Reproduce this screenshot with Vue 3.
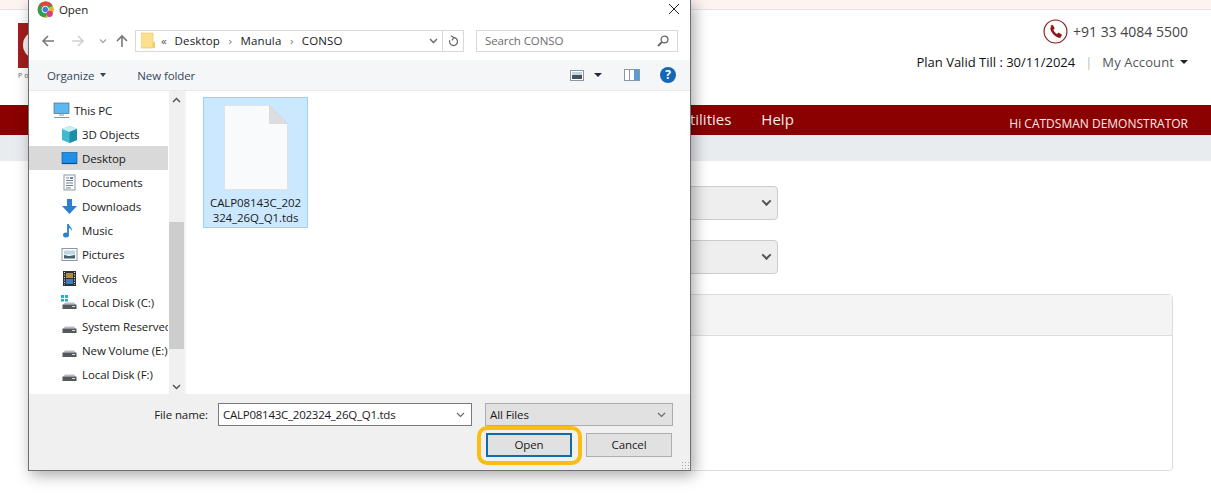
<template>
  <div class="page">
    <div class="top-strip"></div>
    <header class="site-head">
      <div class="logo">
        <div class="logo-mark"><span class="logo-ball"></span></div>
        <div class="logo-text">Po</div>
      </div>
      <div class="head-right">
        <div class="phone">
          <svg class="phone-icon" width="25" height="25" viewBox="0 0 24 24">
            <circle cx="12" cy="12" r="11" fill="none" stroke="#8b1a1a" stroke-width="1.100" />
            <path d="M7 6.500 9.300 5.600l2 3.400-1.400 1.300c.6 1.700 2 3.200 3.700 4l1.400-1.300 3.200 2.200-1 2.200c-.5.7-1.500.8-2.400.5-3.800-1.300-6.700-4.300-7.700-8-.2-1 .1-1.800.9-2.400z" fill="#8b1a1a" />
          </svg>
          <span>+91 33 4084 5500</span>
        </div>
        <div class="account">
          <span class="plan">Plan Valid Till : 30/11/2024</span>
          <span class="sep">|</span>
          <span class="my-acc">My Account</span>
          <span class="caret"></span>
        </div>
      </div>
    </header>
    <nav class="nav">
      <div class="nav-links">
        <span>Utilities</span>
        <span>Help</span>
      </div>
      <div class="nav-user">Hi CATDSMAN DEMONSTRATOR</div>
    </nav>
    <div class="sub-bar"></div>
    <main class="content">
      <div class="fake-select"><i class="sel-chev"></i></div>
      <div class="fake-select"><i class="sel-chev"></i></div>
      <section class="panel">
        <div class="panel-head"></div>
        <div class="panel-body"></div>
      </section>
    </main>

    <!-- windows file dialog on top of the page -->
    <div class="dialog">
      <div class="title-bar">
        <svg class="chrome" width="17" height="17" viewBox="0 0 17 17">
          <circle cx="8.500" cy="8.500" r="8" fill="#2f9e4f" />
          <path d="M8.500.5a8 8 0 0 1 7.100 4.300H8.500a3.700 3.700 0 0 0-3.500 2.500L2.400 3.300A8 8 0 0 1 8.500.5z" fill="#d9483b" />
          <path d="M15.600 4.800A8 8 0 0 1 8 16.500l3-5.200a3.700 3.700 0 0 0 .3-4.200z" fill="#e8b32c" />
          <circle cx="8.300" cy="8.500" r="3.300" fill="#4a78d8" stroke="#fff" stroke-width=".9" />
          <circle cx="12.700" cy="12.800" r="3.100" fill="#d8407a" />
        </svg>
        <span class="title-text">Open</span>
        <svg class="close-x" width="12" height="12" viewBox="0 0 12 12">
          <path d="M1 1l10 10M11 1 1 11" stroke="#222" stroke-width="1" fill="none" />
        </svg>
      </div>

      <div class="addr-row">
        <svg class="nav-arrow" width="14" height="14" viewBox="0 0 14 14">
          <path d="M13 7H2M7 2 2 7l5 5" stroke="#7a7a7a" stroke-width="1.600" fill="none" />
        </svg>
        <svg class="nav-arrow fwd" width="14" height="14" viewBox="0 0 14 14">
          <path d="M1 7h11M7 2l5 5-5 5" stroke="#cfcfcf" stroke-width="1.600" fill="none" />
        </svg>
        <svg class="nav-down" width="8" height="6" viewBox="0 0 8 6">
          <path d="M1 1.500 4 4.500l3-3" stroke="#a8a8a8" stroke-width="1.300" fill="none" />
        </svg>
        <svg class="nav-up" width="14" height="14" viewBox="0 0 14 14">
          <path d="M7 13V2M2 7l5-5 5 5" stroke="#777" stroke-width="1.600" fill="none" />
        </svg>
        <div class="addr-box">
          <svg class="addr-folder" width="14" height="17" viewBox="0 0 14 17">
            <path d="M0 1h12v15H0z" fill="#fbe08d" stroke="#e6c660" stroke-width=".6" />
            <path d="M12 10h2v6h-2z" fill="#f0cc6a" />
          </svg>
          <span class="crumb-more">&laquo;</span>
          <span class="crumb">Desktop</span><i class="crumb-sep">&rsaquo;</i>
          <span class="crumb">Manula</span><i class="crumb-sep">&rsaquo;</i>
          <span class="crumb">CONSO</span>
          <svg class="addr-chev" width="9" height="6" viewBox="0 0 9 6">
            <path d="M1 1l3.500 3.500L8 1" stroke="#666" stroke-width="1.400" fill="none" />
          </svg>
          <span class="addr-refresh">
            <svg width="11" height="12" viewBox="0 0 11 12">
              <path d="M5.500 2.500a4 4 0 1 1-3.800 2.800M2.800 .7l3 1.800-1.800 2.800" stroke="#6c6c6c" stroke-width="1.300" fill="none" />
            </svg>
          </span>
        </div>
        <div class="search-box">
          <span>Search CONSO</span>
          <svg width="12" height="12" viewBox="0 0 12 12">
            <circle cx="7.500" cy="4.500" r="3.400" fill="none" stroke="#666" stroke-width="1.300" />
            <path d="M5 7 1 11" stroke="#666" stroke-width="1.800" />
          </svg>
        </div>
      </div>

      <div class="toolbar">
        <span class="tool">Organize</span>
        <i class="tool-caret"></i>
        <span class="tool new-folder">New folder</span>
        <div class="tool-right">
          <svg width="14" height="11" viewBox="0 0 14 11">
            <rect x=".5" y=".5" width="13" height="10" fill="#fff" stroke="#8a97a3" />
            <rect x="2" y="2" width="10" height="3" fill="#bcd6e4" />
            <rect x="2" y="5" width="10" height="4" fill="#43525c" />
          </svg>
          <i class="tool-caret dark"></i>
          <svg class="pane-icon" width="16" height="12" viewBox="0 0 16 12">
            <rect x=".5" y=".5" width="15" height="11" fill="#fff" stroke="#8a97a3" />
            <rect x="5" y="1" width="1" height="10" fill="#8a97a3" />
            <rect x="10" y="1" width="5" height="10" fill="#5a9bd5" />
          </svg>
          <span class="help">?</span>
        </div>
      </div>

      <div class="browser">
        <ul class="tree">
          <li v-for="item in tree" :key="item.label" class="tree-row" :class="{ top: item.type === 'pc', sel: item.selected }">
            <svg class="tree-icon" width="17" height="17" viewBox="0 0 17 17">
              <template v-if="item.type === 'pc'">
                <rect x="1" y="1" width="15" height="10.500" fill="#5cb8f0" stroke="#5a6a78" stroke-width=".7" />
                <path d="M6 13h5M1 15.500h15" stroke="#8896a2" stroke-width="1.200" />
              </template>
              <template v-else-if="item.type === 'cube'">
                <path d="M8.500 0 16 3v11l-7.500 3L1 14V3z" fill="#45b8cf" />
                <path d="M1 3l7.500 3L16 3 8.500 0z" fill="#c6f0f5" />
                <path d="M8.500 6v11L16 14V3z" fill="#1f8ea8" />
              </template>
              <template v-else-if="item.type === 'desk'">
                <rect x="1" y="2.500" width="15" height="11" fill="#1e90e8" stroke="#14609c" stroke-width=".7" />
                <path d="M1 13.500h15" stroke="#0d4f85" stroke-width="1.200" />
              </template>
              <template v-else-if="item.type === 'doc'">
                <rect x="3" y="1" width="11" height="15" fill="#fff" stroke="#8a97a3" />
                <path d="M5 4h3M5 6.500h7M5 9h7M5 11.500h7M5 14h5" stroke="#6d8090" />
                <rect x="9" y="3" width="3" height="2" fill="#58a" />
              </template>
              <template v-else-if="item.type === 'down'">
                <path d="M6 1h5v7h5l-7.500 8L1 8h5z" fill="#2f7fd0" />
              </template>
              <template v-else-if="item.type === 'music'">
                <path d="M7 2v10.500" stroke="#2d80cc" stroke-width="1.800" />
                <ellipse cx="5" cy="13" rx="3" ry="2.500" fill="#2d80cc" />
                <path d="M7.500 2c.5 2.500 4 3 3.500 7.500C10.500 7 9 6 7.500 6z" fill="#2d80cc" />
              </template>
              <template v-else-if="item.type === 'pic'">
                <rect x="1" y="2.500" width="15" height="12" fill="#fff" stroke="#8a97a3" />
                <rect x="3" y="4.500" width="11" height="4" fill="#bcd6e4" />
                <path d="M3 12.500V9l5 1 6-1v3.500z" fill="#43606c" />
              </template>
              <template v-else-if="item.type === 'vid'">
                <rect x="2" y="1" width="13" height="15" fill="#2c3238" />
                <rect x="5" y="3" width="7" height="5" fill="#b58a3c" />
                <rect x="5" y="9" width="7" height="5" fill="#3d7cc0" />
                <path d="M3.500 2v13M13.500 2v13" stroke="#ddd" stroke-dasharray="1 1.500" />
              </template>
              <template v-else>
                <path d="M2.500 10.500 4 8.500h9l1.500 2z" fill="#b8bcbf" />
                <rect x="1.500" y="10.500" width="14" height="4.500" fill="#54595d" />
                <rect x="11" y="12" width="3" height="1" fill="#ddd" />
                <template v-if="item.type === 'sys'">
                  <rect x="0" y="1" width="3" height="3" fill="#27a9d6" />
                  <rect x="4" y="1" width="3" height="3" fill="#27a9d6" />
                  <rect x="0" y="5" width="3" height="2.500" fill="#27a9d6" />
                  <rect x="4" y="5" width="3" height="2.500" fill="#27a9d6" />
                </template>
              </template>
            </svg>
            <span class="tree-label">{{ item.label }}</span>
          </li>
        </ul>
        <div class="scroll">
          <svg class="scroll-arrow" width="9" height="6" viewBox="0 0 9 6">
            <path d="M1 5 4.500 1.500 8 5" stroke="#555" stroke-width="1.500" fill="none" />
          </svg>
          <div class="scroll-thumb"></div>
          <svg class="scroll-arrow" width="9" height="6" viewBox="0 0 9 6">
            <path d="M1 1l3.500 3.500L8 1" stroke="#555" stroke-width="1.500" fill="none" />
          </svg>
        </div>
        <div class="files">
          <div class="file-item">
            <svg width="64" height="85" viewBox="0 0 64 85">
              <path d="M.5 .5h45l18 18v66H.5z" fill="#f9fafb" stroke="#dfe3e6" />
              <path d="M45.500 .5v18h18z" fill="#dcdddf" stroke="#cfd2d5" stroke-width=".6" />
            </svg>
            <span class="file-name">CALP08143C_202<br />324_26Q_Q1.tds</span>
          </div>
        </div>
      </div>

      <div class="footer">
        <div class="name-row">
          <label class="name-label">File name:</label>
          <div class="name-input">
            <span>CALP08143C_202324_26Q_Q1.tds</span>
            <svg width="9" height="6" viewBox="0 0 9 6">
              <path d="M1 1l3.500 3.500L8 1" stroke="#666" stroke-width="1.100" fill="none" />
            </svg>
          </div>
          <div class="type-box">
            <span>All Files</span>
            <svg width="9" height="6" viewBox="0 0 9 6">
              <path d="M1 1l3.500 3.500L8 1" stroke="#666" stroke-width="1.100" fill="none" />
            </svg>
          </div>
        </div>
        <div class="btn-row">
          <button class="btn primary">Open</button>
          <button class="btn">Cancel</button>
        </div>
        <div class="grip"></div>
      </div>
      <div class="ring"></div>
    </div>
  </div>
</template>

<script setup>
const tree = [
  { label: 'This PC', type: 'pc' },
  { label: '3D Objects', type: 'cube' },
  { label: 'Desktop', type: 'desk', selected: true },
  { label: 'Documents', type: 'doc' },
  { label: 'Downloads', type: 'down' },
  { label: 'Music', type: 'music' },
  { label: 'Pictures', type: 'pic' },
  { label: 'Videos', type: 'vid' },
  { label: 'Local Disk (C:)', type: 'sys' },
  { label: 'System Reserved (D:)', type: 'disk' },
  { label: 'New Volume (E:)', type: 'disk' },
  { label: 'Local Disk (F:)', type: 'disk' },
]
</script>

<style>
html, body {
  margin: 0;
  background: #fff;
  overflow: hidden;
}
</style>

<style scoped>
.page {
  position: relative;
  width: 1211px;
  height: 504px;
  overflow: hidden;
  background: #fff;
  font-family: "Open Sans", "Noto Sans", sans-serif;
  color: #222;
}

.top-strip {
  height: 9px;
  background: #fdf4f2;
  border-bottom: 1px solid #e4e4e4;
}

.site-head {
  height: 95px;
  display: flex;
  justify-content: space-between;
  padding: 0 23px 0 18px;
}

.logo {
  margin-top: 13px;
}

.logo-mark {
  width: 30px;
  height: 45px;
  background: #a31d1d;
  position: relative;
  overflow: hidden;
}

.logo-ball {
  position: absolute;
  left: 5px;
  top: 8px;
  width: 28px;
  height: 28px;
  border-radius: 50%;
  background: #f4f1f0;
}

.logo-text {
  font-size: 7px;
  letter-spacing: 2px;
  color: #666;
  margin-top: 3px;
}

.head-right {
  display: flex;
  flex-direction: column;
  align-items: flex-end;
  padding-top: 9px;
}

.phone {
  display: flex;
  align-items: center;
  gap: 5px;
  font-size: 14px;
  color: #444;
}

.account {
  display: flex;
  align-items: center;
  margin-top: 9px;
  font-size: 13px;
}

.plan {
  color: #111;
}

.sep {
  color: #bbb;
  margin: 0 10px;
}

.my-acc {
  color: #555;
  letter-spacing: 0.1px;
}

.caret {
  width: 0;
  height: 0;
  margin-left: 6px;
  border: 4px solid transparent;
  border-top-color: #222;
  border-bottom: 0;
}

.nav {
  height: 30px;
  background: #8b0000;
  color: #fbeaea;
  display: flex;
  justify-content: space-between;
  align-items: center;
  padding-right: 23px;
}

.nav-links {
  margin-left: 679px;
  display: flex;
  gap: 30px;
  font-size: 15px;
  padding-bottom: 2px;
}

.nav-user {
  font-size: 12px;
  padding-top: 6px;
}

.sub-bar {
  height: 26px;
  background: #e9ecef;
}

.content {
  padding: 25px 38px 0;
}

.fake-select {
  width: 740px;
  height: 34px;
  box-sizing: border-box;
  margin-bottom: 20px;
  background: #eee;
  border: 1px solid #ccc;
  border-radius: 4px;
  position: relative;
}

.sel-chev {
  position: absolute;
  right: 7px;
  top: 12px;
  width: 5px;
  height: 5px;
  border-right: 2px solid #555;
  border-bottom: 2px solid #555;
  transform: rotate(45deg) translate(-1px, -1px);
}

.panel {
  width: 1135px;
  height: 177px;
  box-sizing: border-box;
  border: 1px solid #ddd;
  border-radius: 4px;
}

.panel-head {
  height: 40px;
  background: #f4f4f4;
  border-bottom: 1px solid #ddd;
}

.dialog {
  position: absolute;
  left: 28px;
  top: 0;
  width: 663px;
  height: 471px;
  box-sizing: border-box;
  background: #fff;
  border: 1px solid #6f6f6f;
  border-top: 0;
  box-shadow: 3px 4px 14px rgba(0, 0, 0, 0.35);
  display: flex;
  flex-direction: column;
  font-size: 11.5px;
  letter-spacing: -0.1px;
  color: #1a1a1a;
}

.title-bar {
  height: 18px;
  padding: 0 10px 3px 8px;
  display: flex;
  align-items: center;
}

.title-text {
  margin-left: 5px;
}

.close-x {
  margin-left: auto;
}

.addr-row {
  height: 39px;
  display: flex;
  align-items: center;
  padding: 0 12px;
  box-sizing: border-box;
}

.nav-arrow {
  margin-right: 16px;
}

.nav-arrow.fwd {
  margin-right: 13px;
}

.nav-down {
  margin-left: 1px;
  margin-right: 8px;
}

.nav-up {
  margin-right: 6px;
}

.addr-box {
  width: 329px;
  height: 22px;
  box-sizing: border-box;
  border: 1px solid #d9d9d9;
  display: flex;
  align-items: center;
  padding-left: 5px;
}

.addr-folder {
  margin-right: 6px;
}

.crumb {
  letter-spacing: 0.15px;
}

.crumb-more {
  color: #555;
  margin-right: 8px;
}

.crumb-sep {
  color: #777;
  font-style: normal;
  margin: 0 8.500px;
}

.addr-chev {
  margin-left: auto;
  margin-right: 4px;
}

.addr-refresh {
  width: 20px;
  height: 100%;
  border-left: 1px solid #d9d9d9;
  display: flex;
  align-items: center;
  justify-content: center;
}

.search-box {
  width: 202px;
  height: 22px;
  box-sizing: border-box;
  border: 1px solid #d9d9d9;
  margin-left: 12px;
  padding: 0 8px;
  display: flex;
  align-items: center;
  justify-content: space-between;
  color: #6d6d6d;
}

.toolbar {
  height: 31px;
  box-sizing: border-box;
  background: #f5f6f7;
  border-bottom: 1px solid #e9e9e9;
  display: flex;
  align-items: center;
  padding: 0 14px 0 18px;
  color: #33485a;
}

.tool-caret {
  width: 0;
  height: 0;
  margin-left: 6px;
  border: 3.500px solid transparent;
  border-top: 4px solid #33485a;
  border-bottom: 0;
}

.new-folder {
  margin-left: 31px;
}

.tool-right {
  margin-left: auto;
  display: flex;
  align-items: center;
}

.tool-caret.dark {
  margin-left: 10px;
  border-width: 4px 4px 0;
  border-top-color: #1f2d3a;
}

.pane-icon {
  margin-left: 22px;
}

.help {
  width: 16px;
  height: 16px;
  margin-left: 20px;
  border-radius: 50%;
  background: #1668b4;
  color: #fff;
  font-size: 12px;
  font-weight: 700;
  line-height: 16px;
  text-align: center;
}

.browser {
  height: 303px;
  display: flex;
}

.tree {
  width: 139px;
  margin: 0;
  padding: 7px 0 0;
  list-style: none;
  overflow: hidden;
}

.tree-row {
  height: 24px;
  display: flex;
  align-items: center;
  padding-left: 32px;
  white-space: nowrap;
}

.tree-row.top {
  padding-left: 24px;
}

.tree-row.sel {
  background: #d9d9d9;
}

.tree-icon {
  flex: none;
  margin-right: 4px;
}

.scroll {
  width: 15px;
  margin-left: 1px;
  background: #f0f0f0;
  display: flex;
  flex-direction: column;
  align-items: center;
  position: relative;
}

.scroll-arrow {
  position: absolute;
  top: 6px;
}

.scroll-arrow:last-child {
  top: auto;
  bottom: 4px;
}

.scroll-thumb {
  position: absolute;
  top: 131px;
  width: 15px;
  height: 127px;
  background: #cdcdcd;
}

.files {
  flex: 1;
  border-left: 2px solid #f3f3f3;
  padding: 6px 0 0 17px;
}

.file-item {
  width: 105px;
  height: 131px;
  box-sizing: border-box;
  background: #cce8ff;
  border: 1px solid #99d1ff;
  display: flex;
  flex-direction: column;
  align-items: center;
  padding-top: 7px;
}

.file-item svg {
  flex: none;
}

.file-name {
  margin-top: 5px;
  text-align: center;
  line-height: 15px;
}

.footer {
  flex: 1;
  background: #f0f0f0;
  position: relative;
  padding: 9px 17px 0 0;
}

.name-row {
  display: flex;
  align-items: center;
  justify-content: flex-end;
}

.name-input {
  width: 254px;
  height: 23px;
  box-sizing: border-box;
  background: #fff;
  border: 1px solid #7a7a7a;
  margin-left: 10px;
  padding: 0 6px 0 4px;
  display: flex;
  align-items: center;
  justify-content: space-between;
  letter-spacing: -0.25px;
}

.type-box {
  width: 188px;
  height: 23px;
  box-sizing: border-box;
  background: #e1e1e1;
  border: 1px solid #adadad;
  margin-left: 13px;
  padding: 0 6px 0 4px;
  display: flex;
  align-items: center;
  justify-content: space-between;
}

.btn-row {
  display: flex;
  justify-content: flex-end;
  gap: 14px;
  margin-top: 7px;
  margin-right: 1px;
}

.btn {
  width: 86px;
  height: 24px;
  box-sizing: border-box;
  background: #e1e1e1;
  border: 1px solid #adadad;
  font: inherit;
  letter-spacing: inherit;
  color: #1a1a1a;
  padding: 0 0 2px;
}

.btn.primary {
  border: 2px solid #0f6cab;
}

.grip {
  position: absolute;
  right: 1px;
  bottom: 1px;
  width: 8px;
  height: 8px;
  background-image: radial-gradient(#a8a8a8 1px, transparent 1px);
  background-size: 3px 3px;
}

.ring {
  position: absolute;
  left: 448px;
  top: 426px;
  width: 105px;
  height: 39px;
  box-sizing: border-box;
  border: 4px solid #fcbc14;
  border-radius: 10px;
}
</style>
